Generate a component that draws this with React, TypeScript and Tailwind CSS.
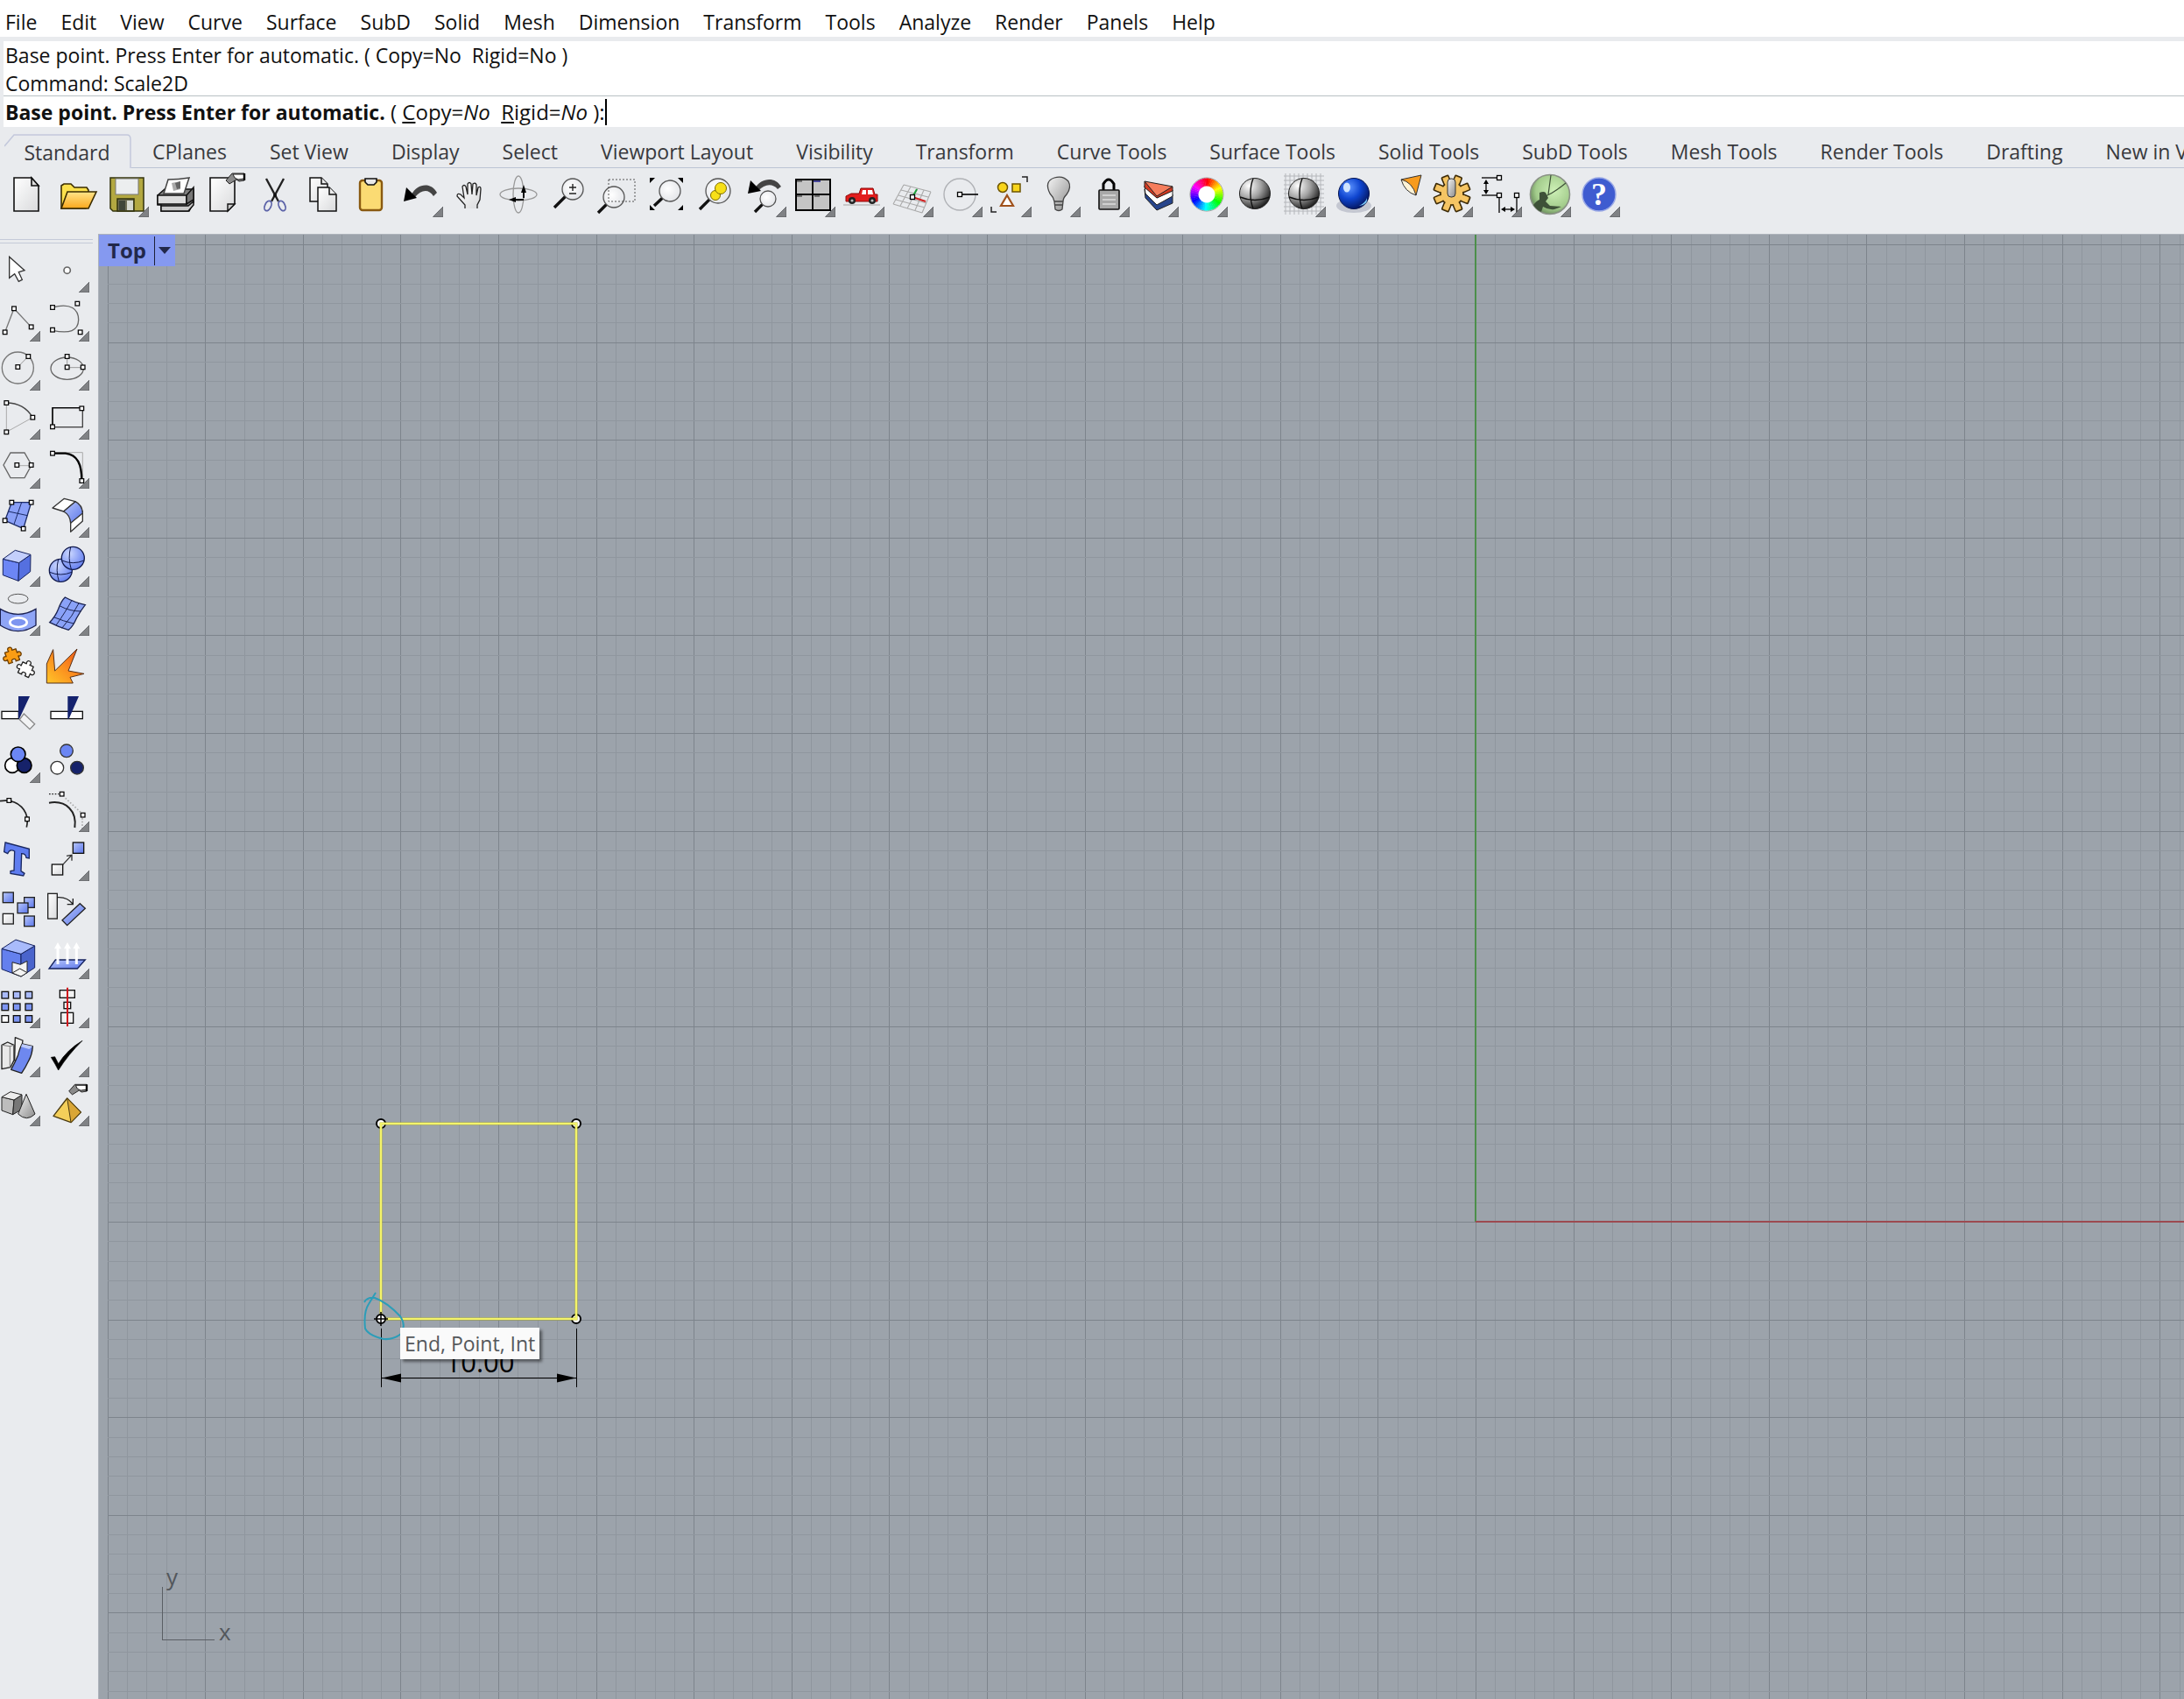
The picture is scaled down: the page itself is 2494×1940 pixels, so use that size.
import { FC, ReactNode } from 'react'

const MENUS = ['File', 'Edit', 'View', 'Curve', 'Surface', 'SubD', 'Solid', 'Mesh', 'Dimension', 'Transform', 'Tools', 'Analyze', 'Render', 'Panels', 'Help']

const TABS = ['Standard', 'CPlanes', 'Set View', 'Display', 'Select', 'Viewport Layout', 'Visibility', 'Transform', 'Curve Tools', 'Surface Tools', 'Solid Tools', 'SubD Tools', 'Mesh Tools', 'Render Tools', 'Drafting', 'New in V8']

type Tool = { name: string; icon: ReactNode; more?: boolean }

// ---------- shared svg bits ----------

const Defs = () => (
  <svg className="absolute h-0 w-0" aria-hidden="true">
    <defs>
      <linearGradient id="paper" x1="0" y1="0" x2="1" y2="1">
        <stop offset="0" stopColor="#ffffff" />
        <stop offset="1" stopColor="#d9dadc" />
      </linearGradient>
      <linearGradient id="gold" x1="0" y1="0" x2="0" y2="1">
        <stop offset="0" stopColor="#ffe58a" />
        <stop offset="1" stopColor="#fba81c" />
      </linearGradient>
      <linearGradient id="blue" x1="0" y1="0" x2="1" y2="1">
        <stop offset="0" stopColor="#b9c8fb" />
        <stop offset="1" stopColor="#5b76ea" />
      </linearGradient>
      <linearGradient id="grey" x1="0" y1="0" x2="1" y2="1">
        <stop offset="0" stopColor="#f4f4f4" />
        <stop offset="1" stopColor="#8c8c8c" />
      </linearGradient>
      <linearGradient id="flame" x1="0" y1="1" x2="1" y2="0">
        <stop offset="0" stopColor="#ffc629" />
        <stop offset="0.5" stopColor="#fb8a1e" />
        <stop offset="1" stopColor="#e8501a" />
      </linearGradient>
      <radialGradient id="ballGrey" cx="0.3" cy="0.25" r="0.8">
        <stop offset="0" stopColor="#ffffff" />
        <stop offset="0.5" stopColor="#a3a3a3" />
        <stop offset="1" stopColor="#1e1e1e" />
      </radialGradient>
      <radialGradient id="ballBlue" cx="0.35" cy="0.3" r="0.75">
        <stop offset="0" stopColor="#5c93ff" />
        <stop offset="0.5" stopColor="#0f45cf" />
        <stop offset="1" stopColor="#03145c" />
      </radialGradient>
      <radialGradient id="ballSoft" cx="0.35" cy="0.3" r="0.8">
        <stop offset="0" stopColor="#cbd7ff" />
        <stop offset="1" stopColor="#5c78ee" />
      </radialGradient>
      <radialGradient id="ballGreen" cx="0.6" cy="0.4" r="0.65">
        <stop offset="0" stopColor="#cdf0b6" />
        <stop offset="0.7" stopColor="#a3cc8c" />
        <stop offset="1" stopColor="#668a58" />
      </radialGradient>
      <radialGradient id="lens" cx="0.4" cy="0.4" r="0.7">
        <stop offset="0" stopColor="#ffffff" />
        <stop offset="1" stopColor="#e0e2e6" />
      </radialGradient>
    </defs>
  </svg>
)

const Node: FC<{ x: number; y: number; s?: number }> = ({ x, y, s = 14 }) => (
  <rect x={x - s / 2} y={y - s / 2} width={s} height={s} fill="#fff" stroke="#000" strokeWidth={s / 3.8} />
)

const Magnifier: FC<{ x: number; y: number; r: number; hx: number; hy: number }> = ({ x, y, r, hx, hy }) => {
  const d = Math.hypot(hx - x, hy - y)
  return (
    <g>
      <line x1={x + ((hx - x) * r) / d} y1={y + ((hy - y) * r) / d} x2={hx} y2={hy} stroke="#111" strokeWidth="3.4" />
      <circle cx={x} cy={y} r={r} fill="url(#lens)" stroke="#555" strokeWidth="1.3" />
    </g>
  )
}

const PointingHand = () => (
  <g>
    <path d="M0 9 L7 1 H21 V9 L15 10 L12 8 L4 13 Z" fill="#8a8a8a" stroke="#222" strokeWidth="1" />
    <path d="M8 2 H21 V7 L14 8 L10 6 Z" fill="#fff" stroke="#222" strokeWidth="1" />
    <path d="M21 1 V9" stroke="#000" strokeWidth="2.4" />
  </g>
)

const WireBall = () => (
  <g>
    <circle cx="31" cy="29" r="17.5" fill="url(#ballGrey)" stroke="#222" />
    <path d="M29 12 C25 22 25 36 29 46 M14 33 Q31 40 48 33" fill="none" stroke="#111" strokeWidth="1.4" />
  </g>
)

const ColorWheel = () => {
  const n = 48
  const at = (i: number) => {
    const a = (i / n) * Math.PI * 2 - Math.PI / 2
    return `${32 + 14 * Math.cos(a)} ${30 + 14 * Math.sin(a)}`
  }
  return (
    <g fill="none">
      <circle cx="32" cy="30" r="19" stroke="#999" strokeWidth="1" fill="#fff" />
      {Array.from({ length: n }, (_, i) => (
        <path key={i} d={`M${at(i)} A14 14 0 0 1 ${at(i + 1.2)}`} stroke={`hsl(${(i / n) * 360} 100% 50%)`} strokeWidth="9" />
      ))}
    </g>
  )
}

const Gear = () => (
  <g>
    {Array.from({ length: 8 }, (_, i) => (
      <rect key={i} x="28" y="8" width="8" height="12" rx="1" fill="#f0bb55" stroke="#3b2a08" strokeWidth="1.6" transform={`rotate(${i * 45 + 22} 32 29)`} />
    ))}
    <circle cx="32" cy="29" r="13" fill="#f5c564" stroke="#3b2a08" strokeWidth="1.6" />
    {Array.from({ length: 8 }, (_, i) => (
      <rect key={i} x="29" y="10" width="6" height="10" fill="#f5c564" transform={`rotate(${i * 45 + 22} 32 29)`} />
    ))}
    <rect x="27" y="12" width="9" height="21" rx="4" fill="url(#grey)" stroke="#333" />
  </g>
)

const PuzzlePiece = () => (
  <path d="M-20 -20 H-6 C-14 -36 14 -36 6 -20 H20 V-6 C36 -14 36 14 20 6 V20 H6 C13 7 -13 7 -6 20 H-20 V6 C-36 14 -36 -14 -20 -6 Z" />
)

// ---------- top toolbar, one 56 x 56 cell per icon ----------

const TOOLBAR: Tool[] = [
  {
    name: 'New',
    icon: (
      <g stroke="#111" strokeWidth="1.6">
        <path d="M14 11 H34 L42 20 V49 H14 Z" fill="url(#paper)" />
        <path d="M34 11 V20 H42 Z" fill="#ddd" />
      </g>
    ),
  },
  {
    name: 'Open',
    icon: (
      <g stroke="#3a2c00" strokeWidth="1.6">
        <path d="M12 46 V20 L15 18 H23 L27 22 H41 L43 25 V30 L40 46 Z" fill="#fbe04c" />
        <path d="M12 46 L19 27 H52 L43 46 Z" fill="url(#gold)" />
      </g>
    ),
  },
  {
    name: 'Save',
    more: true,
    icon: (
      <g stroke="#33330c" strokeWidth="1.5">
        <path d="M12 11 H50 V49 H15 L12 46 Z" fill="#b3a841" />
        <rect x="18" y="12" width="26" height="18" fill="#eceeef" stroke="#777" strokeWidth="1" />
        <rect x="20" y="35" width="19" height="14" fill="#6d6d55" />
        <rect x="22" y="37" width="7" height="11" fill="#3f4538" stroke="none" />
        <rect x="31" y="37" width="7" height="11" fill="#d5d8d0" stroke="none" />
      </g>
    ),
  },
  {
    name: 'Print',
    icon: (
      <g stroke="#111" strokeWidth="1.5">
        <path d="M10 31 L18 24 H51 V39 L46 49 H14 V42 H10 Z" fill="#808080" />
        <path d="M17 29 L22 13 Q34 13 46 11 L40 29 Z" fill="#fff" stroke="#444" />
        <path d="M26 17 L36 15 V24 L28 26 Z" fill="#aaa" stroke="none" />
        <path d="M30 17 L36 15 V23 L32 24 Z" fill="#666" stroke="none" />
        <path d="M10 31 H43 V41 H10 Z" fill="#dcdcdc" />
        <path d="M43 31 L51 22 V36 L43 41 Z" fill="#777" />
        <path d="M14 43 H45 L51 38 V42 L45 49 H14 Z" fill="#c9c9c9" />
      </g>
    ),
  },
  {
    name: 'Document properties',
    icon: (
      <g>
        <path d="M14 11 H42 V41 L34 49 H14 Z" fill="url(#paper)" stroke="#111" strokeWidth="1.6" />
        <path d="M34 49 V41 H42 Z" fill="#ccc" stroke="#111" strokeWidth="1.4" />
        <g transform="translate(32 5)"><PointingHand /></g>
      </g>
    ),
  },
  {
    name: 'Cut',
    icon: (
      <g fill="none">
        <path d="M22 12 L36 38 M42 12 L28 38" stroke="#222" strokeWidth="2.4" />
        <ellipse cx="24" cy="43" rx="3.5" ry="6" transform="rotate(25 24 43)" stroke="#5b62a8" strokeWidth="1.8" />
        <ellipse cx="40" cy="43" rx="3.5" ry="6" transform="rotate(-25 40 43)" stroke="#5b62a8" strokeWidth="1.8" />
        <circle cx="32" cy="31" r="2" fill="#111" />
      </g>
    ),
  },
  {
    name: 'Copy',
    icon: (
      <g stroke="#111" strokeWidth="1.5" fill="url(#paper)">
        <path d="M16 11 H29 L36 18 V38 H16 Z" />
        <path d="M29 11 V18 H36" />
        <path d="M25 22 H38 L46 30 V49 H25 Z" />
        <path d="M38 22 V30 H46" />
      </g>
    ),
  },
  {
    name: 'Paste',
    icon: (
      <g stroke="#3f2b05">
        <rect x="17" y="14" width="25" height="34" rx="3" fill="#fbdb73" strokeWidth="2.4" stroke="#8a5a10" />
        <path d="M23 12 H36 V16 L33 19 H26 L23 16 Z" fill="#e8e8e8" strokeWidth="1.6" stroke="#111" />
      </g>
    ),
  },
  {
    name: 'Undo',
    more: true,
    icon: (
      <g>
        <path d="M20 30 C26 18 42 15 49 28 L45 32 C39 23 31 25 24 33 Z" fill="#444" />
        <path d="M11 38 L14 22 L26 34 Z" fill="#000" />
      </g>
    ),
  },
  {
    name: 'Pan',
    icon: (
      <path d="M25 46 V42 L16 32 Q16 28 20 30 L24 34 L22 21 Q24 18 26 21 L28 30 L28 18 Q30 15 32 18 L33 30 L34 18 Q37 16 38 19 L38 31 L40 22 Q43 20 43 24 L42 36 L39 42 V46" fill="url(#paper)" stroke="#222" strokeWidth="1.3" />
    ),
  },
  {
    name: 'Rotate view',
    icon: (
      <g fill="none" strokeWidth="1.3">
        <ellipse cx="30" cy="30" rx="21" ry="7" stroke="#999" />
        <ellipse cx="30" cy="30" rx="6" ry="21" stroke="#999" />
        <path d="M36 22 V34 M24 36 H36" stroke="#111" strokeWidth="2" />
        <path d="M36 19 L39 28 H33 Z M19 36 L27 33 V39 Z" fill="#000" />
      </g>
    ),
  },
  {
    name: 'Zoom dynamic',
    icon: (
      <g>
        <Magnifier x={36} y={24} r={12} hx={15} hy={45} />
        <path d="M32 22 H40 M36 18 V26 M32 29 H40" stroke="#222" strokeWidth="1.4" />
      </g>
    ),
  },
  {
    name: 'Zoom window',
    icon: (
      <g>
        <Magnifier x={27} y={33} r={12} hx={9} hy={51} />
        <rect x="21" y="13" width="30" height="25" fill="none" stroke="#555" strokeDasharray="2 2" />
      </g>
    ),
  },
  {
    name: 'Zoom extents',
    icon: (
      <g>
        <Magnifier x={35} y={26} r={12} hx={17} hy={43} />
        <path d="M12 11 h6 l-6 6 Z M50 11 h-6 l6 6 Z M12 48 h6 l-6 -6 Z M50 48 h-6 l6 -6 Z" fill="#000" />
      </g>
    ),
  },
  {
    name: 'Zoom selected',
    icon: (
      <g>
        <Magnifier x={34} y={26} r={14} hx={13} hy={47} />
        <circle cx="31" cy="31" r="5.5" fill="#f7e018" stroke="#7c6c00" />
        <circle cx="37" cy="23" r="6.5" fill="#f7e018" stroke="#7c6c00" />
      </g>
    ),
  },
  {
    name: 'Undo view change',
    more: true,
    icon: (
      <g>
        <path d="M20 23 C27 11 43 9 50 21 L46 24 C40 17 31 18 24 26 Z" fill="#444" />
        <path d="M12 29 L15 14 L27 26 Z" fill="#000" />
        <Magnifier x={35} y={35} r={9} hx={20} hy={50} />
      </g>
    ),
  },
  {
    name: 'Four viewports',
    more: true,
    icon: (
      <g>
        <rect x="11" y="13" width="39" height="35" fill="#c4c4c4" stroke="#000" strokeWidth="2" />
        <path d="M30 12 V49 M10 30 H51" stroke="#000" strokeWidth="1.8" />
        <path d="M12 15 H18 M12 32 H18 M32 32 H38" stroke="#555" strokeWidth="1.5" />
        <path d="M31 15 H39" stroke="#1b1b8c" strokeWidth="1.5" />
      </g>
    ),
  },
  {
    name: 'Set view',
    more: true,
    icon: (
      <g>
        <path d="M9 42 H51" stroke="#bbb" strokeWidth="1.5" />
        <path d="M12 38 V32 L18 29 H27 L29 23 H43 L45 30 H48 V38 Z" fill="#e21d1d" stroke="#8d0b0b" />
        <path d="M31 25 H35 V30 H30 Z M37 25 H42 L43 30 H37 Z" fill="#fff" />
        <circle cx="19" cy="37" r="4" fill="#222" /><circle cx="19" cy="37" r="1.6" fill="#bbb" />
        <circle cx="42" cy="37" r="4" fill="#222" /><circle cx="42" cy="37" r="1.6" fill="#bbb" />
      </g>
    ),
  },
  {
    name: 'Set CPlane',
    more: true,
    icon: (
      <g fill="none">
        <path d="M22 19 L53 27 M19 25 L50 33 M16 31 L48 40 M13 36 L46 45 M10 41 L43 51 M22 19 L10 41 M30 21 L18 43 M38 23 L26 46 M45 25 L35 48 M53 27 L43 51" stroke="#aaa" strokeWidth="1.1" />
        <path d="M32 33 L37 24" stroke="#1ea03a" strokeWidth="2" />
        <path d="M32 33 L47 38" stroke="#d02020" strokeWidth="2" />
        <Node x={32} y={33} s={5} />
      </g>
    ),
  },
  {
    name: 'Object snap',
    more: true,
    icon: (
      <g>
        <circle cx="30" cy="30" r="18" fill="none" stroke="#b0b2b6" strokeWidth="1.4" />
        <path d="M30 30 H51" stroke="#000" strokeWidth="1.6" />
        <Node x={30} y={30} s={5} />
      </g>
    ),
  },
  {
    name: 'Select',
    more: true,
    icon: (
      <g strokeWidth="1.5">
        <circle cx="23" cy="22" r="5.5" fill="#f8d51c" stroke="#6e5500" />
        <rect x="34" y="18" width="9" height="9" fill="#f8d51c" stroke="#6e5500" />
        <path d="M28 31 L35 43 H21 Z" fill="#fff" stroke="#a0521c" strokeWidth="2.2" />
        <path d="M45 10 H51 V16 M10 44 V50 H16" fill="none" stroke="#222" />
      </g>
    ),
  },
  {
    name: 'Hide',
    more: true,
    icon: (
      <g stroke="#444" strokeWidth="1.3">
        <path d="M26 38 Q25 33 21 29 Q14 15 26 11 Q36 8 42 15 Q46 22 40 30 Q36 34 36 38 L35 47 Q31 50 27 47 Z" fill="url(#grey)" />
        <path d="M26 38 H36 M27 42 H35" />
      </g>
    ),
  },
  {
    name: 'Lock',
    more: true,
    icon: (
      <g>
        <path d="M26 26 V18 Q32 8 38 18 V26" fill="none" stroke="#000" strokeWidth="3" />
        <rect x="21" y="25" width="23" height="22" rx="1" fill="#a8a8a8" stroke="#111" strokeWidth="1.6" />
        <path d="M25 31 H40 M25 36 H40 M25 41 H40" stroke="#ddd" strokeWidth="1.5" />
      </g>
    ),
  },
  {
    name: 'Edit layers',
    more: true,
    icon: (
      <g strokeWidth="1" stroke="#222">
        <path d="M17 24 L31 40 L49 30 V40 L31 48 L18 34 Z" fill="#27458c" />
        <path d="M17 20 L31 34 L49 25 V32 L31 42 L18 29 Z" fill="#fff" />
        <path d="M17 15 L31 29 L49 21 V26 L31 34 L17 22 Z" fill="#d23a22" />
        <path d="M17 15 L49 21 L31 32 Z" fill="#f57d5c" />
      </g>
    ),
  },
  { name: 'Object color', more: true, icon: <ColorWheel /> },
  { name: 'Shade', icon: <WireBall /> },
  {
    name: 'Shaded viewport',
    more: true,
    icon: (
      <g>
        <path d="M10 6 V53 M15 6 V53 M20 6 V53 M25 6 V53 M30 6 V53 M35 6 V53 M40 6 V53 M45 6 V53 M50 6 V53 M8 9 H54 M8 14 H54 M8 19 H54 M8 24 H54 M8 29 H54 M8 34 H54 M8 39 H54 M8 44 H54 M8 49 H54" stroke="#b4b6ba" />
        <WireBall />
      </g>
    ),
  },
  {
    name: 'Render',
    more: true,
    icon: (
      <g>
        <ellipse cx="32" cy="43" rx="20" ry="8" fill="#b4b8c4" opacity="0.7" />
        <circle cx="32" cy="29" r="17.5" fill="url(#ballBlue)" stroke="#06144e" />
        <ellipse cx="24" cy="22" rx="4" ry="5.5" fill="#cfe4ff" />
        <path d="M38 43 Q45 40 47 34 Q48 42 38 43 Z" fill="#7fd0ff" />
      </g>
    ),
  },
  {
    name: 'Spotlight',
    more: true,
    icon: (
      <g stroke="#333">
        <path d="M30 13 L53 8 L47 31 Z" fill="#f79b1e" />
        <path d="M30 13 Q43 16 47 31 Q34 27 30 13 Z" fill="#fff3d6" />
      </g>
    ),
  },
  { name: 'Options', more: true, icon: <Gear /> },
  {
    name: 'Dimension',
    more: true,
    icon: (
      <g stroke="#222" strokeWidth="1.5" fill="none">
        <path d="M10 11 H28 M10 31 H28 M15 15 V28 M30 33 V51 M50 33 V51 M34 47 H46" />
        <path d="M15 13 L18 18 H12 Z M15 30 L18 25 H12 Z M32 47 L37 44 V50 Z M48 47 L43 44 V50 Z" fill="#000" stroke="none" />
        <Node x={30} y={11} s={5} />
        <Node x={30} y={31} s={5} />
        <Node x={50} y={31} s={5} />
      </g>
    ),
  },
  {
    name: 'Grasshopper',
    more: true,
    icon: (
      <g>
        <circle cx="32" cy="30" r="22.5" fill="url(#ballGreen)" stroke="#8a9186" strokeWidth="1.6" />
        <path d="M13 42 Q17 37 20 36 L20 28 Q25 26 27 28 L30 34 L27 38 L32 43 L45 44 L37 47 Q30 48 24 44 L22 50 Q16 47 13 42 Z" fill="#3e5138" />
        <path d="M27 32 Q38 27 50 17 M30 30 L33 8" fill="none" stroke="#3e5138" strokeWidth="1.2" />
      </g>
    ),
  },
  {
    name: 'Help',
    more: true,
    icon: (
      <g>
        <circle cx="32" cy="30" r="19" fill="#3f5cd0" stroke="#9aa9e6" strokeWidth="1.5" />
        <text x="32" y="42" textAnchor="middle" className="fill-white font-['Liberation_Serif',serif] text-[36px] font-bold">?</text>
      </g>
    ),
  },
]

// ---------- side toolbar, drawn on a 168 unit tall cell ----------

const LEFT: Tool[] = [
  { name: 'Cancel', icon: <path d="M32 46 V118 L50 104 L64 130 L76 124 L64 98 L84 92 Z" fill="#fff" stroke="#333" strokeWidth="4" /> },
  {
    name: 'Polyline',
    more: true,
    icon: <g><path d="M17 136 L48 55 L107 118" fill="none" stroke="#777" strokeWidth="4" /><Node x={17} y={136} /><Node x={48} y={55} /><Node x={107} y={118} /></g>,
  },
  {
    name: 'Circle',
    more: true,
    icon: <g><circle cx="61" cy="90" r="54" fill="none" stroke="#777" strokeWidth="4" /><path d="M61 87 L97 51" stroke="#999" strokeWidth="3" /><Node x={61} y={87} /><Node x={97} y={51} /></g>,
  },
  {
    name: 'Arc',
    more: true,
    icon: <g fill="none"><path d="M22 42 V142 L112 92" stroke="#aaa" strokeWidth="3" /><path d="M22 42 Q82 42 112 92" stroke="#444" strokeWidth="4" /><Node x={22} y={42} /><Node x={112} y={92} /><Node x={22} y={142} /></g>,
  },
  {
    name: 'Polygon',
    more: true,
    icon: <g><path d="M12 87 L36 45 H84 L108 87 L84 131 H36 Z" fill="none" stroke="#666" strokeWidth="4" /><path d="M58 89 H107" stroke="#aaa" strokeWidth="3" /><Node x={58} y={87} /><Node x={107} y={87} /></g>,
  },
  {
    name: 'Surface from points',
    more: true,
    icon: (
      <g>
        <path d="M40 47 H107 L80 137 L17 109 Z" fill="#8aa0f7" stroke="#1b2a66" strokeWidth="4" />
        <path d="M74 47 L48 122 M29 78 L94 92" stroke="#1b2a66" strokeWidth="3" />
        <Node x={40} y={47} /><Node x={107} y={47} /><Node x={17} y={109} /><Node x={80} y={137} />
      </g>
    ),
  },
  {
    name: 'Box',
    more: true,
    icon: (
      <g stroke="#15225e" strokeWidth="3" strokeLinejoin="round">
        <path d="M10 73 L65 86 L63 148 L10 128 Z" fill="#6c86f5" />
        <path d="M65 86 L105 58 L104 116 L63 148 Z" fill="#5570e0" />
        <path d="M10 73 L52 43 L105 58 L65 86 Z" fill="#c3cffc" />
      </g>
    ),
  },
  {
    name: 'Project curves',
    more: true,
    icon: (
      <g>
        <ellipse cx="62" cy="41" rx="34" ry="16" fill="none" stroke="#555" strokeWidth="3" />
        <path d="M1 76 Q62 112 123 76 V132 Q62 172 1 132 Z" fill="#8fa5f6" stroke="#1a2050" strokeWidth="4" />
        <ellipse cx="63" cy="122" rx="29" ry="16" fill="#7d95f0" stroke="#fff" strokeWidth="8" />
      </g>
    ),
  },
  {
    name: 'Boolean puzzle',
    icon: (
      <g strokeWidth="4" strokeLinejoin="round">
        <g transform="translate(42 70) rotate(-20)" fill="#fb9d14" stroke="#6b3c00"><PuzzlePiece /></g>
        <g transform="translate(88 116) rotate(25)" fill="#fff" stroke="#222"><PuzzlePiece /></g>
      </g>
    ),
  },
  {
    name: 'Trim',
    icon: (
      <g strokeWidth="4">
        <rect x="6" y="91" width="58" height="25" fill="#fff" stroke="#111" />
        <path d="M82 99 L119 134 L102 152 L67 119 Z" fill="#f2f3f4" stroke="#888" />
        <path d="M63 39 H102 L66 116 H63 Z" fill="#14226e" />
      </g>
    ),
  },
  {
    name: 'Group',
    more: true,
    icon: (
      <g stroke="#000" strokeWidth="5">
        <circle cx="42" cy="108" r="25" fill="#fff" />
        <circle cx="83" cy="108" r="25" fill="#16226a" />
        <circle cx="62" cy="70" r="25" fill="#6b86f3" />
      </g>
    ),
  },
  {
    name: 'Edit points',
    icon: <g><path d="M0 62 C62 52 104 96 91 152" fill="none" stroke="#222" strokeWidth="5" /><Node x={31} y={60} /><Node x={93} y={124} /></g>,
  },
  {
    name: 'Text object',
    icon: <path d="M18 36 L100 58 L100 90 L90 88 Q88 74 74 74 L72 134 L84 142 L80 150 L36 142 L36 134 L48 132 L50 66 Q34 56 26 74 L14 68 Z" fill="#5f7df0" stroke="#1a2860" strokeWidth="4" />,
  },
  {
    name: 'Copy objects',
    icon: (
      <g stroke="#222" strokeWidth="4">
        <rect x="10" y="39" width="36" height="35" fill="url(#blue)" />
        <rect x="83" y="56" width="35" height="35" fill="url(#blue)" />
        <rect x="60" y="75" width="36" height="35" fill="url(#blue)" />
        <rect x="10" y="112" width="36" height="35" fill="url(#paper)" />
        <rect x="83" y="120" width="35" height="35" fill="url(#blue)" />
      </g>
    ),
  },
  {
    name: 'Boolean difference',
    more: true,
    icon: (
      <g stroke="#15225e" strokeWidth="3" strokeLinejoin="round">
        <path d="M6 64 L72 82 V159 L6 134 Z" fill="#6480ee" />
        <path d="M72 82 L119 54 V129 L72 159 Z" fill="#4a64cc" />
        <path d="M6 64 L54 33 L119 54 L72 82 Z" fill="#a9bbfb" />
        <path d="M42 110 L70 118 L93 106 V146 L72 159 L42 147 Z" fill="#f3f3f3" stroke="#222" />
        <path d="M42 147 L68 132 L93 146" fill="none" stroke="#222" />
      </g>
    ),
  },
  {
    name: 'Array',
    more: true,
    icon: (
      <g stroke="#111" strokeWidth="4">
        {[43, 84, 125].map((y) =>
          [6, 46, 87].map((x) => <rect key={`${x}-${y}`} x={x} y={y} width="23" height="23" fill={x === 6 && y === 125 ? '#fff' : y === 43 ? '#a9bafa' : '#7d95f3'} />),
        )}
      </g>
    ),
  },
  {
    name: 'Flow along surface',
    more: true,
    icon: (
      <g stroke="#222" strokeWidth="4" strokeLinejoin="round">
        <path d="M52 32 L78 42 L66 120 L50 110 Z" fill="#f2f2f2" />
        <path d="M6 58 L26 48 L48 58 V110 L36 134 L6 140 Z" fill="#e9e9e9" />
        <path d="M6 58 L34 62 L48 58 M34 62 V134" fill="none" stroke="#777" strokeWidth="3" />
        <path d="M76 54 L112 62 Q110 92 98 112 Q88 134 74 154 L38 142 Q52 116 62 92 Q68 66 76 54 Z" fill="#6e88ef" />
        <path d="M76 54 L112 62 L100 72 L72 64 Z" fill="#bccafc" stroke="none" />
      </g>
    ),
  },
  {
    name: 'Mesh from object',
    more: true,
    icon: (
      <g stroke="#222" strokeWidth="3" strokeLinejoin="round">
        <path d="M6 68 L48 78 L44 128 L6 114 Z" fill="#bdbdbd" />
        <path d="M48 78 L75 60 V110 L44 128 Z" fill="#777" />
        <path d="M6 68 L36 50 L75 60 L48 78 Z" fill="#ededed" />
        <path d="M90 58 L120 126 Q92 154 62 126 Z" fill="url(#grey)" />
      </g>
    ),
  },
]

const RIGHT: Tool[] = [
  { name: 'Point', more: true, icon: <circle cx="92" cy="92" r="11" fill="#fff" stroke="#666" strokeWidth="5" /> },
  {
    name: 'Curve',
    more: true,
    icon: (
      <g>
        <path d="M42 51 C106 34 131 58 131 94 C130 132 100 142 42 130" fill="none" stroke="#666" strokeWidth="4" />
        <Node x={42} y={51} /><Node x={127} y={38} /><Node x={42} y={128} /><Node x={137} y={136} />
      </g>
    ),
  },
  {
    name: 'Ellipse',
    more: true,
    icon: <g fill="none"><ellipse cx="92" cy="92" rx="56" ry="38" stroke="#666" strokeWidth="4" /><path d="M92 51 V89 H146" stroke="#999" strokeWidth="3" /><Node x={92} y={51} /><Node x={92} y={88} /><Node x={146} y={88} /></g>,
  },
  {
    name: 'Rectangle',
    more: true,
    icon: <g fill="none"><rect x="42" y="59" width="103" height="66" stroke="#444" strokeWidth="4" /><path d="M42 125 V59 H145" stroke="#000" strokeWidth="4" /><Node x={142} y={61} /><Node x={42} y={124} /></g>,
  },
  {
    name: 'Fillet curves',
    more: true,
    icon: <g fill="none"><path d="M42 44 H145 V141" stroke="#aaa" strokeWidth="3" /><path d="M42 47 H86 C128 52 142 84 142 141" stroke="#000" strokeWidth="7" /><Node x={42} y={47} /><Node x={142} y={141} /></g>,
  },
  {
    name: 'Fillet surface',
    more: true,
    icon: (
      <g stroke="#333" strokeWidth="4" strokeLinejoin="round">
        <path d="M42 66 L82 34 L120 44 L80 78 Z" fill="#fff" />
        <path d="M104 148 L145 111 V76 L104 112 Z" fill="#fff" />
        <path d="M80 78 L120 44 Q144 56 145 84 L104 118 Q102 90 80 78 Z" fill="url(#blue)" />
      </g>
    ),
  },
  {
    name: 'Sphere boolean',
    more: true,
    icon: (
      <g strokeWidth="4" stroke="#111a4c">
        <circle cx="70" cy="112" r="39" fill="url(#ballSoft)" />
        <path d="M62 74 Q52 112 64 150 M32 118 Q70 134 108 118" fill="none" strokeWidth="3" />
        <circle cx="112" cy="70" r="39" fill="url(#ballSoft)" />
        <path d="M104 32 Q94 70 106 108 M74 78 Q112 94 150 78" fill="none" strokeWidth="3" />
      </g>
    ),
  },
  {
    name: 'Mesh surface',
    more: true,
    icon: (
      <g stroke="#1b2350" strokeWidth="4">
        <path d="M85 36 Q118 54 154 62 Q138 82 124 108 Q112 136 97 148 Q62 138 32 122 Q52 102 62 76 Q72 48 85 36 Z" fill="#8aa2f8" />
        <path d="M68 66 Q100 84 140 84 M46 104 Q80 118 114 126 M108 46 Q88 84 54 132 M132 56 Q112 100 74 142" fill="none" strokeWidth="3" />
      </g>
    ),
  },
  { name: 'Explode', icon: <path d="M22 162 V96 L44 47 L50 120 L126 45 L96 120 L150 130 L102 142 L112 162 Z" fill="url(#flame)" stroke="#553019" strokeWidth="3" /> },
  {
    name: 'Split',
    icon: (
      <g strokeWidth="4">
        <rect x="36" y="91" width="109" height="25" fill="#fff" stroke="#111" />
        <path d="M94 39 H132 L98 116 H94 Z" fill="#14226e" />
      </g>
    ),
  },
  {
    name: 'Ungroup',
    icon: (
      <g stroke="#333" strokeWidth="4">
        <circle cx="90" cy="58" r="22" fill="#6b86f3" />
        <circle cx="58" cy="116" r="22" fill="#fff" />
        <circle cx="126" cy="116" r="22" fill="#16226a" />
      </g>
    ),
  },
  {
    name: 'Control points',
    more: true,
    icon: (
      <g fill="none">
        <path d="M30 38 H64" stroke="#222" strokeWidth="4" strokeDasharray="5 5" />
        <path d="M86 52 L138 100 M144 120 V156" stroke="#aaa" strokeWidth="5" strokeDasharray="5 6" />
        <path d="M30 68 C90 58 126 98 118 153" stroke="#222" strokeWidth="6" />
        <Node x={74} y={38} /><Node x={146} y={110} />
      </g>
    ),
  },
  {
    name: 'Move',
    more: true,
    icon: (
      <g stroke="#111" strokeWidth="4">
        <rect x="112" y="36" width="37" height="37" fill="url(#blue)" />
        <rect x="40" y="111" width="37" height="36" fill="url(#paper)" />
        <path d="M77 112 L107 80 M90 82 L108 79 V98" fill="none" stroke="#333" />
      </g>
    ),
  },
  {
    name: 'Rotate',
    icon: (
      <g stroke="#222" strokeWidth="4">
        <rect x="26" y="43" width="32" height="86" fill="url(#paper)" />
        <path d="M136 77 L154 94 L92 152 L75 134 Z" fill="url(#blue)" />
        <path d="M60 56 Q92 54 111 78 M112 60 V80 H92" fill="none" />
      </g>
    ),
  },
  {
    name: 'Project to CPlane',
    more: true,
    icon: (
      <g>
        <path d="M52 102 H154 L127 132 H30 Z" fill="url(#blue)" stroke="#15225e" strokeWidth="4" />
        <path d="M60 117 V60 M93 117 V60 M124 117 V60" stroke="#fff" strokeWidth="9" />
        <path d="M60 42 L72 64 H48 Z M93 42 L105 64 H81 Z M124 42 L136 64 H112 Z" fill="#fff" />
      </g>
    ),
  },
  {
    name: 'Align',
    more: true,
    icon: (
      <g stroke="#111" strokeWidth="4" fill="#f2f2f2">
        <rect x="67" y="38" width="51" height="26" />
        <rect x="81" y="79" width="23" height="22" />
        <rect x="71" y="115" width="42" height="36" />
        <path d="M93 29 V162" stroke="#d0141c" strokeWidth="6" />
      </g>
    ),
  },
  { name: 'Check', more: true, icon: <path d="M37 100 L50 98 L62 122 Q92 74 144 43 Q96 90 62 144 Q52 124 37 100 Z" fill="#000" stroke="#000" strokeWidth="2" /> },
  {
    name: 'Analyze',
    more: true,
    icon: (
      <g strokeLinejoin="round">
        <path d="M92 72 L139 120 L105 155 L45 133 Z" fill="#f4cf5a" stroke="#4a3a10" strokeWidth="4" />
        <path d="M92 72 L139 120 L105 155 Z" fill="#d9a636" stroke="#4a3a10" strokeWidth="3" />
        <g transform="translate(98 22) scale(2.9)"><PointingHand /></g>
      </g>
    ),
  },
]

const SideIcon: FC<{ tool: Tool; wide?: boolean }> = ({ tool, wide }) => {
  const w = wide ? 168 : 138
  return (
    <button type="button" aria-label={tool.name} className="h-14">
      <svg className="h-14 w-full" viewBox={`0 0 ${w} 168`} preserveAspectRatio="xMinYMin meet">
        {tool.icon}
        {tool.more && <path d={`M${w} 132 V168 H${w - 36} Z`} fill="#808285" stroke="#4c4e52" strokeWidth="2" />}
      </svg>
    </button>
  )
}

// ---------- drawing area ----------

const ORIGIN_X = 1572
const ORIGIN_Y = 1127
const CELL = 22.32

const Grid = () => {
  const left = Math.round(ORIGIN_X - 70 * CELL)
  const lines: ReactNode[] = []
  for (let i = -70; i <= 120; i++) {
    const x = Math.round(ORIGIN_X + i * CELL)
    lines.push(<line key={`v${i}`} x1={x} y1="0" x2={x} y2="100%" stroke={i % 5 === 0 ? '#7d848c' : '#8f969e'} />)
  }
  for (let i = -50; i <= 70; i++) {
    const y = Math.round(ORIGIN_Y + i * CELL)
    lines.push(<line key={`h${i}`} x1={left} y1={y} x2="100%" y2={y} stroke={i % 5 === 0 ? '#7d848c' : '#8f969e'} />)
  }
  return <g shapeRendering="crispEdges">{lines}</g>
}

const Drawing = () => (
  <svg className="absolute inset-0 h-full w-full" aria-label="Top viewport">
    <Grid />
    <g shapeRendering="crispEdges">
      <line x1={ORIGIN_X} y1="0" x2={ORIGIN_X} y2={ORIGIN_Y} stroke="#4c8f4a" strokeWidth="2" />
      <line x1={ORIGIN_X} y1={ORIGIN_Y} x2="100%" y2={ORIGIN_Y} stroke="#9c4a50" strokeWidth="2" />
      {/* world axes */}
      <path d="M72 1544 V1604 H132" fill="none" stroke="#5a5e64" />
    </g>
    <text x="77" y="1542" className="fill-[#53575c] text-[26px]">y</text>
    <text x="137" y="1605" className="fill-[#53575c] text-[26px]">x</text>
    {/* dimension */}
    <g stroke="#000" strokeWidth="1" fill="#000">
      <path d="M322.5 1249 V1316 M545.5 1249 V1316 M323 1305.5 H545" />
      <path d="M323 1305.5 l22 -5 v10 Z M545 1305.5 l-22 -5 v10 Z" stroke="none" />
    </g>
    <text x="435" y="1299" textAnchor="middle" className="fill-black text-[31px]">10.00</text>
    {/* selected square */}
    <g fill="#fff" stroke="#000" strokeWidth="2">
      <circle cx="322" cy="1015" r="5" />
      <circle cx="545" cy="1015" r="5" />
      <circle cx="545" cy="1238" r="5" />
    </g>
    <rect x="322" y="1015" width="223" height="223" fill="none" stroke="#b9ba3c" strokeWidth="3" />
    <rect x="322" y="1015" width="223" height="223" fill="none" stroke="#f4f46a" strokeWidth="2" />
    <circle cx="322" cy="1238" r="5" fill="#fff" stroke="#000" strokeWidth="2" />
    <path d="M322 1230 V1246 M314 1238 H330" stroke="#000" strokeWidth="1.5" />
    <path d="M303 1219 Q306 1213 315 1214 Q329 1219 344 1235 Q351 1245 345 1255 Q336 1262 325 1261 Q308 1257 304 1249 Q302 1230 308 1221 L316 1208" fill="none" stroke="#2c9db8" strokeWidth="2" />
  </svg>
)

const App = () => {
  return (
    <div className="flex min-h-screen flex-col bg-[#e9ebee] font-['Open_Sans','Noto_Sans',sans-serif] text-[23px] leading-8 text-[#111]">
      <Defs />
      <nav className="flex h-[42px] items-center gap-[27px] overflow-hidden whitespace-nowrap bg-white px-1.5 pt-2">
        {MENUS.map((m) => (
          <button key={m} type="button">{m}</button>
        ))}
      </nav>
      {/* Command history and prompt */}
      <div className="mt-[5px] ml-1 bg-white px-0.5">
        <p className="h-8 whitespace-pre">Base point. Press Enter for automatic. ( Copy=No  Rigid=No )</p>
        <p className="h-[30px]">Command: Scale2D</p>
      </div>
      <div className="ml-1 flex h-[36px] items-center border-t border-[#b9c0c4] bg-white px-0.5">
        <label htmlFor="command" className="border-r-2 border-black text-[24px] leading-[29px] whitespace-pre">
          <b className="text-[23px]">Base point. Press Enter for automatic.</b> ( <u>C</u>opy=<i>No</i>  <u>R</u>igid=<i>No</i> ):
        </label>
        <input id="command" type="text" className="flex-1 bg-transparent px-1 outline-none" />
      </div>
      {/* Toolbar tabs */}
      <div role="tablist" className="mt-2 flex h-[39px] overflow-hidden whitespace-nowrap pl-[5px] text-[#38393d]">
        {TABS.map((t, i) =>
          i === 0 ? (
            <button key={t} type="button" role="tab" aria-selected="true" className="relative w-[145px] shrink-0 pr-0.5 pt-0.5">
              <svg className="absolute inset-0 h-full w-full" viewBox="0 0 145 39" preserveAspectRatio="none">
                <path d="M0 14 L11 1 H140 Q144 1 144 6 V39" fill="none" stroke="#c3c8dc" strokeWidth="1.5" />
              </svg>
              {t}
            </button>
          ) : (
            <button key={t} type="button" role="tab" aria-selected="false" className="shrink-0 border-b border-[#bcc4d4] pt-0.5 pr-[25px] pl-6">
              {t}
            </button>
          ),
        )}
        <span className="flex-1 border-b border-[#bcc4d4]" />
      </div>
      <div role="toolbar" aria-label="Standard" className="flex h-[75px] overflow-hidden pl-0.5">
        {TOOLBAR.map((tool) => (
          <button key={tool.name} type="button" aria-label={tool.name} className="h-14 w-14 shrink-0">
            <svg className="h-14 w-14" viewBox="0 0 56 56">
              {tool.icon}
              {tool.more && <path d="M56 44 V55.5 H44.5 Z" fill="#808285" stroke="#4c4e52" strokeWidth="0.7" />}
            </svg>
          </button>
        ))}
      </div>
      <div className="flex flex-1">
        <aside className="w-28 shrink-0">
          <div className="mt-1.5 mr-1.5 h-[5px] border-y border-[#c5cad8]" />
          <div className="grid w-[102px] grid-cols-[46px_56px]">
            {LEFT.map((tool, i) => (
              <div key={tool.name} className="contents">
                <SideIcon tool={tool} />
                <SideIcon tool={RIGHT[i]} wide />
              </div>
            ))}
          </div>
        </aside>
        <main className="relative flex-1 overflow-hidden border-t border-l border-[#aeb3bb] bg-[#9ca3ab]">
          <Drawing />
          <div className="relative flex h-[36px] w-[87px] items-center bg-[#8599f0] font-bold text-[#22284a]">
            <button type="button" className="pl-2.5 text-[24px] leading-8">Top</button>
            <button type="button" aria-label="Viewport menu" className="ml-auto flex h-[33px] w-6 items-center border-l border-[#1d2036] pl-1">
              <svg className="h-2 w-3.5" viewBox="0 0 14 8"><path d="M0 0 H14 L7 8 Z" fill="#22284a" /></svg>
            </button>
          </div>
          {/* Snap tooltip */}
          <div role="tooltip" className="absolute top-[1248px] left-[344px] bg-[#fafafa] px-[5px] py-0.5 text-[#55585c] shadow-[3px_3px_3px_rgba(0,0,0,0.45)]">
            End, Point, Int
          </div>
        </main>
      </div>
    </div>
  )
}

export default App
